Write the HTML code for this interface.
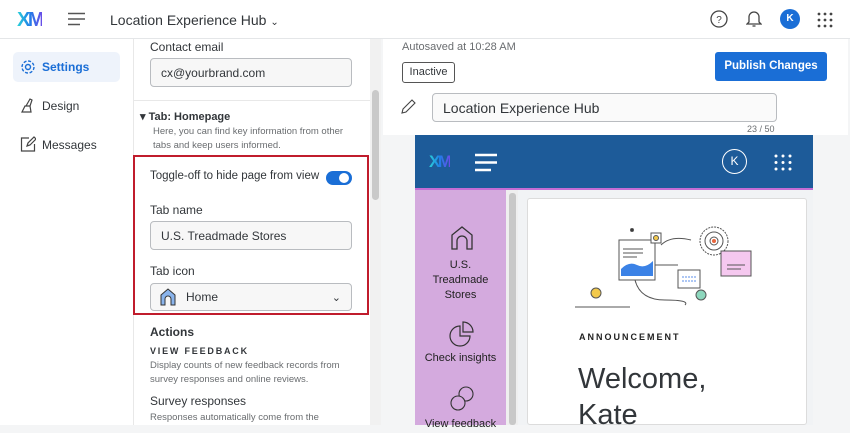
<!DOCTYPE html>
<html><head><meta charset="utf-8"><style>
*{box-sizing:border-box;margin:0;padding:0}
body{width:850px;height:425px;overflow:hidden;font-family:"Liberation Sans",sans-serif;background:#f4f5f6;position:relative;color:#32363a}
.abs{position:absolute}
.top{left:0;top:0;width:850px;height:39px;background:#fff;border-bottom:1px solid #e4e6e8}
.nav{left:0;top:39px;width:133px;height:386px;background:#fff}
.panel{left:133px;top:39px;width:237px;height:386px;background:#fff;border-left:1px solid #e8e8e8}
.sb{left:370px;top:39px;width:11px;height:386px;background:#f1f1f1}
.input{border:1px solid #b9bcc0;border-radius:4px;background:#f7f7f7;font-size:12px;padding-left:10px;display:flex;align-items:center}
.lbl{font-size:12px;color:#32363a}
.small{font-size:9.5px;color:#6a6d70;line-height:14px}
.xm{font-weight:bold;letter-spacing:-2.5px;background:linear-gradient(90deg,#2ad4d8,#1f7fe8,#6a4de8);-webkit-background-clip:text;background-clip:text;color:transparent}
</style></head><body>
<div class="abs top"></div>
<div class="abs xm" style="left:17px;top:9px;font-size:20px">XM</div>
<svg class="abs" style="left:68px;top:12px" width="17" height="14"><path d="M0 1.5H17M0 7H17M0 12.5H12" stroke="#555" stroke-width="1.6"/></svg>
<div class="abs" style="left:110px;top:12px;font-size:14px;color:#32363a">Location Experience Hub <span style="font-size:10px">⌄</span></div>
<svg class="abs" style="left:710px;top:10px" width="18" height="18"><circle cx="9" cy="9" r="8" fill="none" stroke="#444" stroke-width="1.3"/><text x="9" y="13" font-size="10" text-anchor="middle" fill="#444" font-family="Liberation Sans">?</text></svg>
<svg class="abs" style="left:746px;top:9px" width="16" height="19"><path d="M3 13V8a5 5 0 0 1 10 0v5l2 2H1z" fill="none" stroke="#444" stroke-width="1.3"/><path d="M6.5 17h3" stroke="#444" stroke-width="1.3"/></svg>
<div class="abs" style="left:780px;top:9px;width:20px;height:20px;border-radius:50%;background:#1a6ed6;color:#fff;font-size:10px;font-weight:bold;text-align:center;line-height:20px">K</div>
<svg class="abs" style="left:817px;top:12px" width="16" height="16" fill="#444"><circle cx="2" cy="2" r="1.4"/><circle cx="8" cy="2" r="1.4"/><circle cx="14" cy="2" r="1.4"/><circle cx="2" cy="8" r="1.4"/><circle cx="8" cy="8" r="1.4"/><circle cx="14" cy="8" r="1.4"/><circle cx="2" cy="14" r="1.4"/><circle cx="8" cy="14" r="1.4"/><circle cx="14" cy="14" r="1.4"/></svg>

<div class="abs nav"></div>
<div class="abs" style="left:13px;top:52px;width:107px;height:30px;background:#eef3fb;border-radius:5px"></div>
<svg class="abs" style="left:20px;top:59px" width="16" height="16"><circle cx="8" cy="8" r="2.5" fill="none" stroke="#1a6ed6" stroke-width="1.4"/><circle cx="8" cy="8" r="6" fill="none" stroke="#1a6ed6" stroke-width="1.4" stroke-dasharray="3 1.7"/></svg>
<div class="abs" style="left:42px;top:60px;font-size:12px;color:#1a6ed6;font-weight:bold">Settings</div>
<svg class="abs" style="left:20px;top:97px" width="16" height="16"><path d="M2 15l3-6h5l1 6zM6 9l4-7 2 1-2 6" fill="none" stroke="#444" stroke-width="1.2"/></svg>
<div class="abs" style="left:42px;top:99px;font-size:12px">Design</div>
<svg class="abs" style="left:20px;top:136px" width="16" height="16"><path d="M9 2H1.5v13h13V8M7 10l1-3 6-6 2 2-6 6z" fill="none" stroke="#444" stroke-width="1.2"/></svg>
<div class="abs" style="left:42px;top:138px;font-size:12px">Messages</div>

<div class="abs panel"></div>
<div class="abs lbl" style="left:150px;top:40px">Contact email</div>
<div class="abs input" style="left:150px;top:58px;width:202px;height:29px">cx@yourbrand.com</div>
<div class="abs" style="left:134px;top:100px;width:236px;height:1px;background:#e8e8e8"></div>
<div class="abs" style="left:140px;top:110px;font-size:11px;font-weight:bold">▾ Tab: Homepage</div>
<div class="abs small" style="left:153px;top:125px">Here, you can find key information from other<br>tabs and keep users informed.</div>
<div class="abs" style="left:133px;top:155px;width:236px;height:160px;border:2px solid #c01c2c"></div>
<div class="abs lbl" style="left:150px;top:170px;font-size:11.5px">Toggle-off to hide page from view</div>
<div class="abs" style="left:326px;top:171px;width:26px;height:14px;border-radius:7px;background:#1a6ed6"></div>
<div class="abs" style="left:339px;top:173px;width:10px;height:10px;border-radius:50%;background:#fff"></div>
<div class="abs lbl" style="left:150px;top:203px">Tab name</div>
<div class="abs input" style="left:150px;top:221px;width:202px;height:29px">U.S. Treadmade Stores</div>
<div class="abs lbl" style="left:150px;top:264px">Tab icon</div>
<div class="abs input" style="left:150px;top:283px;width:202px;height:28px;padding-left:8px"><svg width="18" height="18"><path d="M2 17V7l7-6 7 6v10h-4v-6a3 3 0 0 0-6 0v6z" fill="#8ab4ec" stroke="#333" stroke-width="1"/></svg><span style="margin-left:9px">Home</span><span style="margin-left:auto;margin-right:10px;font-size:11px">⌄</span></div>
<div class="abs" style="left:150px;top:325px;font-size:12px;font-weight:bold">Actions</div>
<div class="abs" style="left:150px;top:346px;font-size:9px;font-weight:bold;letter-spacing:1.8px">VIEW FEEDBACK</div>
<div class="abs small" style="left:150px;top:359px">Display counts of new feedback records from<br>survey responses and online reviews.</div>
<div class="abs lbl" style="left:150px;top:394px">Survey responses</div>
<div class="abs small" style="left:150px;top:411px">Responses automatically come from the</div>
<div class="abs sb"></div>
<div class="abs" style="left:372px;top:90px;width:7px;height:110px;background:#c9c9c9;border-radius:4px"></div>

<div class="abs" style="left:383px;top:39px;width:465px;height:96px;background:#fff"></div>
<div class="abs" style="left:402px;top:41px;font-size:11px;color:#6a6d70">Autosaved at 10:28 AM</div>
<div class="abs" style="left:402px;top:62px;width:53px;height:21px;border:1px solid #555;border-radius:3px;font-size:11px;text-align:center;line-height:19px">Inactive</div>
<div class="abs" style="left:715px;top:52px;width:112px;height:29px;background:#1a6ed6;border-radius:3px;color:#fff;font-size:11.5px;font-weight:bold;text-align:center;line-height:29px">Publish Changes</div>
<svg class="abs" style="left:400px;top:99px" width="16" height="16"><path d="M2 14l1-4 9-9 3 3-9 9z" fill="none" stroke="#444" stroke-width="1.1"/></svg>
<div class="abs input" style="left:432px;top:93px;width:345px;height:29px;font-size:14px;background:#fafafa">Location Experience Hub</div>
<div class="abs" style="left:747px;top:124px;font-size:9px;color:#6a6d70">23 / 50</div>

<div class="abs" style="left:415px;top:135px;width:398px;height:53px;background:#1d5b99"></div>
<div class="abs" style="left:415px;top:188px;width:398px;height:2px;background:#c56dd4"></div>
<div class="abs xm" style="left:429px;top:152px;font-size:17px">XM</div>
<svg class="abs" style="left:475px;top:153px" width="22" height="19"><path d="M0 2H22M0 9.5H22M0 17H16" stroke="#fff" stroke-width="2.4"/></svg>
<div class="abs" style="left:722px;top:149px;width:25px;height:25px;border:1.5px solid #fff;border-radius:50%;color:#fff;font-size:12px;text-align:center;line-height:22px">K</div>
<svg class="abs" style="left:774px;top:154px" width="18" height="17" fill="#fff"><circle cx="2" cy="2" r="1.5"/><circle cx="9" cy="2" r="1.5"/><circle cx="16" cy="2" r="1.5"/><circle cx="2" cy="8.5" r="1.5"/><circle cx="9" cy="8.5" r="1.5"/><circle cx="16" cy="8.5" r="1.5"/><circle cx="2" cy="15" r="1.5"/><circle cx="9" cy="15" r="1.5"/><circle cx="16" cy="15" r="1.5"/></svg>
<div class="abs" style="left:415px;top:190px;width:91px;height:235px;background:#d4aade"></div>
<div class="abs" style="left:506px;top:190px;width:12px;height:235px;background:#efefef"></div>
<div class="abs" style="left:509px;top:193px;width:7px;height:232px;background:#c8c8c8;border-radius:3px"></div>
<div class="abs" style="left:518px;top:190px;width:295px;height:235px;background:#f1f3f5"></div>
<div class="abs" style="left:527px;top:198px;width:280px;height:227px;background:#fff;border:1px solid #dcdcdc;border-radius:3px"></div>
<svg class="abs" style="left:450px;top:225px" width="24" height="26"><path d="M2 24V10l10-8 10 8v14h-5v-8a5 5 0 0 0-10 0v8z" fill="none" stroke="#333" stroke-width="1.3"/></svg>
<div class="abs" style="left:415px;top:258px;width:91px;text-align:center;font-size:11px;line-height:15px;color:#222">U.S.<br>Treadmade<br>Stores</div>
<svg class="abs" style="left:448px;top:320px" width="28" height="28"><path d="M12 6a10 10 0 1 0 10 10H12z" fill="none" stroke="#333" stroke-width="1.2"/><path d="M15 2v10h10A10 10 0 0 0 15 2z" fill="none" stroke="#333" stroke-width="1.2"/></svg>
<div class="abs" style="left:415px;top:352px;width:91px;text-align:center;font-size:11px;color:#222">Check insights</div>
<svg class="abs" style="left:448px;top:385px" width="28" height="28"><circle cx="18" cy="9" r="7" fill="none" stroke="#333" stroke-width="1.1"/><circle cx="10" cy="18" r="7" fill="#d4aade" stroke="#333" stroke-width="1.1"/></svg>
<div class="abs" style="left:415px;top:418px;width:91px;text-align:center;font-size:11px;color:#222">View feedback</div>

<svg class="abs" style="left:575px;top:225px" width="190" height="85" fill="none" stroke="#555" stroke-width="1">
<rect x="44" y="15" width="36" height="40" fill="#fff"/><path d="M46 44q8-8 16-4t16-4v15H46z" fill="#3b82e6" stroke="none"/>
<path d="M48 24h20M48 28h20M48 32h14"/>
<rect x="76" y="8" width="10" height="10" fill="#fff"/><circle cx="81" cy="13" r="2.5" fill="#f2c94c"/>
<circle cx="139" cy="16" r="14" stroke-dasharray="2 1"/><circle cx="139" cy="16" r="9"/><circle cx="139" cy="16" r="4"/><circle cx="139" cy="16" r="2" fill="#e8663d" stroke="none"/>
<rect x="146" y="26" width="30" height="25" fill="#f5c8ef"/><path d="M152 40h18M152 44h14"/>
<rect x="103" y="45" width="22" height="18" fill="#fff"/><path d="M107 52h14M107 56h14" stroke="#5b8fe8" stroke-dasharray="2 1"/><circle cx="126" cy="70" r="5" fill="#8dd7bd"/>
<circle cx="21" cy="68" r="5" fill="#f2c94c"/><path d="M80 40h23M86 20q10-10 30-5M60 55q5 20 30 20t20 5M0 82h55"/>
<circle cx="57" cy="5" r="1.5" fill="#333"/>
</svg>
<div class="abs" style="left:579px;top:332px;font-size:9px;font-weight:bold;letter-spacing:2px;color:#222">ANNOUNCEMENT</div>
<div class="abs" style="left:578px;top:361px;font-size:29px;line-height:36px;color:#32363a">Welcome,<br>Kate</div>
</body></html>
